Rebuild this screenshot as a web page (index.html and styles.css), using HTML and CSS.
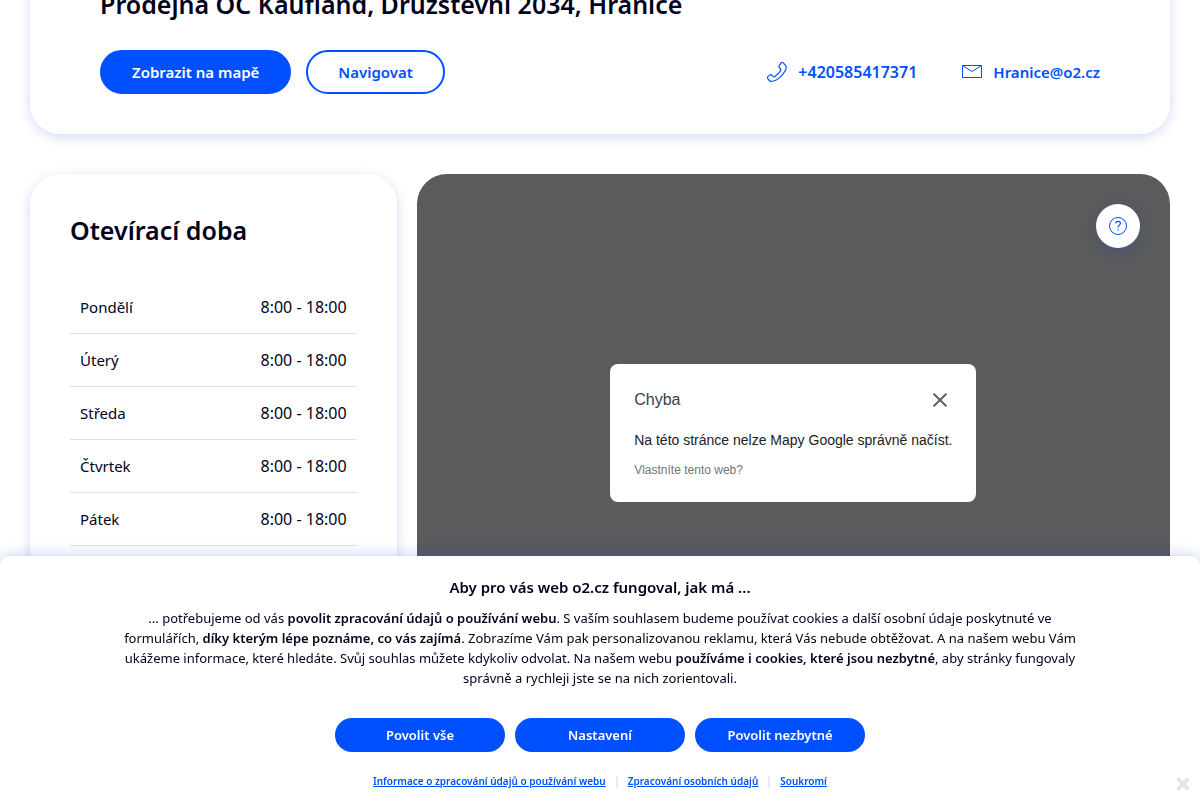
FILE: index.html
```
<!DOCTYPE html>
<html lang="cs">
<head>
  <meta charset="utf-8">
  <meta name="viewport" content="width=device-width, initial-scale=1">
  <title>Prodejna Hranice</title>
  <link rel="stylesheet" href="styles.css">
</head>
<body>
  <main class="page">
    <section class="card store">
      <h1>Prodejna OC Kaufland, Družstevní 2034, Hranice</h1>
      <div class="store-row">
        <div class="store-buttons">
          <button class="button" type="button">Zobrazit na mapě</button>
          <button class="button button-outline" type="button">Navigovat</button>
        </div>
        <div class="contacts">
          <a class="phone" href="tel:+420585417371">
            <svg width="22" height="22" viewBox="0 0 22 22" fill="none" stroke="currentColor" stroke-width="1.2" stroke-linejoin="round">
              <path d="M15.2 1.7c.8-.6 1.5-.6 2.1.1l2.4 2.8c.6.8.6 2.9-.5 5.1-1.4 2.9-3.7 5.5-6.7 7.9-2.4 1.9-5 2.9-7 2.9-1.1 0-3.1-1.7-3.9-3.3-.3-.7-.1-1.300.5-1.800l1.500-1.300c.7-.6 1.400-.5 2.100.1l1.300 1.200c.6.5 1.200.6 1.900.1 2-1.400 4.200-3.500 5.600-5.600.5-.7.4-1.300-.1-1.900l-1-1.200c-.6-.7-.7-1.400-.1-2.200z"/>
            </svg>
            +420585417371
          </a>
          <a href="mailto:Hranice@o2.cz">
            <svg width="22" height="22" viewBox="0 0 22 22" fill="none" stroke="currentColor">
              <path d="M1.5 4.5h19v12h-19zM1.5 4.5l9.5 6 9.5-6"/>
            </svg>
            Hranice@o2.cz
          </a>
        </div>
      </div>
    </section>

    <div class="columns">
      <section class="card hours">
        <h2>Otevírací doba</h2>
        <table>
          <tbody>
            <tr><th scope="row">Pondělí</th><td>8:00 - 18:00</td></tr>
            <tr><th scope="row">Úterý</th><td>8:00 - 18:00</td></tr>
            <tr><th scope="row">Středa</th><td>8:00 - 18:00</td></tr>
            <tr><th scope="row">Čtvrtek</th><td>8:00 - 18:00</td></tr>
            <tr><th scope="row">Pátek</th><td>8:00 - 18:00</td></tr>
          </tbody>
        </table>
      </section>

      <section class="map">
        <button class="help" type="button" aria-label="Nápověda">
          <svg width="20" height="20" viewBox="0 0 20 20" fill="none" stroke="currentColor">
            <circle cx="10" cy="10" r="8.5"/>
            <path d="M7.8 7.4c.1-1.3 1-2.1 2.3-2.1s2.3.8 2.3 2c0 1-.5 1.5-1.2 2.1-.8.7-1.1 1.2-1.1 2.3M10.1 13.2v1.3" stroke-width="1.2"/>
          </svg>
        </button>
        <div class="map-error">
          <div class="map-error-head">
            <span>Chyba</span>
            <button type="button" aria-label="Zavřít">
              <svg width="24" height="24" viewBox="0 0 24 24" fill="none" stroke="currentColor" stroke-width="2">
                <path d="M5.7 5.7l12.6 12.6M18.3 5.7L5.7 18.3"/>
              </svg>
            </button>
          </div>
          <p>Na této stránce nelze Mapy Google správně načíst.</p>
          <a href="#">Vlastníte tento web?</a>
        </div>
      </section>
    </div>
  </main>

  <div class="cookies">
    <h3>Aby pro vás web o2.cz fungoval, jak má ...</h3>
    <p>... potřebujeme od vás <strong>povolit zpracování údajů o používání webu</strong>. S vaším souhlasem budeme používat cookies a další osobní údaje poskytnuté ve formulářích, <strong>díky kterým lépe poznáme, co vás zajímá</strong>. Zobrazíme Vám pak personalizovanou reklamu, která Vás nebude obtěžovat. A na našem webu Vám ukážeme informace, které hledáte. Svůj souhlas můžete kdykoliv odvolat. Na našem webu <strong>používáme i cookies, které jsou nezbytné</strong>, aby stránky fungovaly správně a rychleji jste se na nich zorientovali.</p>
    <div class="cookies-buttons">
      <button class="button button-small" type="button">Povolit vše</button>
      <button class="button button-small" type="button">Nastavení</button>
      <button class="button button-small" type="button">Povolit nezbytné</button>
    </div>
    <div class="cookies-links">
      <a href="#">Informace o zpracování údajů o používání webu</a>
      <a href="#">Zpracování osobních údajů</a>
      <a href="#">Soukromí</a>
    </div>
    <button class="cookies-close" type="button" aria-label="Zavřít">
      <svg width="14" height="14" viewBox="0 0 14 14" fill="none" stroke="currentColor" stroke-width="3.5">
        <path d="M1.5 1.5l11 11M12.5 1.5l-11 11"/>
      </svg>
    </button>
  </div>
</body>
</html>
```
FILE: styles.css
```
* {
  box-sizing: border-box;
}

body {
  margin: 0;
  background-color: #fff;
  color: #01011c;
  font-family: "Noto Sans", sans-serif;
  font-size: 16px;
  line-height: 24px;
}

h1,
h2,
h3,
p {
  margin: 0;
}

a {
  color: #0050ff;
}

button {
  font-family: inherit;
  cursor: pointer;
}

svg {
  display: block;
}

.page {
  padding: 0 30px;
}

.card {
  background-color: #fff;
  border-radius: 30px;
  box-shadow: 0 3px 12px rgba(0, 50, 200, 0.18);
}

/* Store header */
.store {
  margin-top: -40px;
  padding: 28px 70px 40px;
}

h1,
h2 {
  font-size: 25px;
  line-height: 32px;
  font-weight: 600;
}

.store-row {
  display: flex;
  justify-content: space-between;
  align-items: center;
  margin-top: 30px;
}

.store-buttons {
  display: flex;
  gap: 15px;
}

.button {
  height: 44px;
  padding: 0 30px;
  border: 2px solid #0050ff;
  border-radius: 22px;
  background-color: #0050ff;
  color: #fff;
  font-size: 15px;
  font-weight: 600;
}

.button-outline {
  background-color: #fff;
  color: #0050ff;
}

.contacts {
  display: flex;
  gap: 44px;
}

.contacts a {
  display: flex;
  align-items: center;
  gap: 10px;
  font-size: 15px;
  font-weight: 600;
  text-decoration: none;
}

.contacts .phone {
  font-size: 16px;
}

/* Opening hours and map */
.columns {
  display: grid;
  grid-template-columns: repeat(3, 1fr);
  gap: 20px;
  margin-top: 40px;
}

.hours {
  padding: 40px;
}

.hours table {
  width: 100%;
  margin-top: 35px;
  border-collapse: collapse;
}

.hours tr {
  border-bottom: 1px solid #e1e1e4;
}

.hours th,
.hours td {
  padding: 14px 10px;
  font-weight: 400;
  text-align: left;
}

.hours th {
  font-size: 15px;
}

.hours td {
  text-align: right;
}

.map {
  position: relative;
  grid-column: span 2;
  display: flex;
  flex-direction: column;
  align-items: center;
  padding-top: 190px;
  border-radius: 30px;
  background-color: #5a5b5d;
}

.help {
  position: absolute;
  top: 30px;
  right: 30px;
  display: flex;
  align-items: center;
  justify-content: center;
  width: 44px;
  height: 44px;
  padding: 0;
  border: none;
  border-radius: 50%;
  background-color: #fff;
  color: #0050ff;
  box-shadow: 0 3px 12px rgba(0, 50, 200, 0.18);
}

.map-error {
  padding: 24px;
  border-radius: 8px;
  background-color: #fff;
  font-family: "Liberation Sans", Arial, sans-serif;
}

.map-error-head {
  display: flex;
  justify-content: space-between;
  align-items: center;
  color: #3c4043;
}

.map-error-head button {
  padding: 0;
  border: none;
  background: none;
  color: #5f6062;
}

.map-error p {
  margin: 16px 0 10px;
  color: #212121;
  font-size: 14px;
}

.map-error a {
  display: block;
  color: #757575;
  font-size: 12px;
  line-height: 16px;
  text-decoration: none;
}

/* Cookie bar */
.cookies {
  position: fixed;
  right: 0;
  bottom: 0;
  left: 0;
  padding: 20px 110px 10px;
  border-radius: 10px 10px 0 0;
  background-color: #fff;
  box-shadow: 0 0 15px rgba(0, 50, 200, 0.24);
  text-align: center;
}

.cookies h3 {
  font-size: 15px;
  line-height: 22px;
  font-weight: 600;
}

.cookies p {
  margin-top: 10px;
  font-size: 13px;
  line-height: 20px;
}

.cookies strong {
  font-weight: 600;
}

.cookies-buttons {
  display: flex;
  justify-content: center;
  gap: 10px;
  margin-top: 30px;
}

.button-small {
  width: 170px;
  height: 34px;
  padding: 0;
  font-size: 13px;
}

.cookies-links {
  display: flex;
  justify-content: center;
  align-items: center;
  margin-top: 20px;
}

.cookies-links a {
  font-size: 10px;
  line-height: 18px;
  font-weight: 600;
}

.cookies-links a + a::before {
  content: "";
  display: inline-block;
  width: 2px;
  height: 12px;
  margin: 0 10px;
  background-color: #ebebee;
  vertical-align: middle;
}

.cookies-close {
  position: absolute;
  right: 10px;
  bottom: 9px;
  padding: 0;
  border: none;
  background: none;
  color: #e3e4ec;
}
```
